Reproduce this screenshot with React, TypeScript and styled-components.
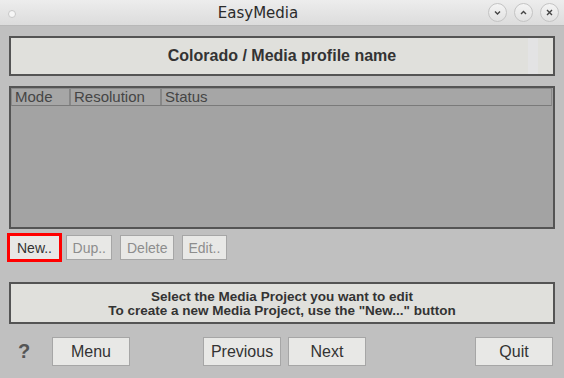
import styled, { createGlobalStyle } from "styled-components";

const GlobalStyle = createGlobalStyle`
    html, body {
        margin: 0;
        padding: 0;
        background: #c0c0c0;
    }
`;

const Window = styled.div`
    width: 564px;
    height: 378px;
    background: #c0c0c0;
    font-family: "Liberation Sans", Arial, sans-serif;
    display: flex;
    flex-direction: column;
    overflow: hidden;
`;

const TitleBar = styled.div`
    height: 26px;
    box-sizing: border-box;
    background: linear-gradient(#ededed, #dcdcdc);
    border-bottom: 1px solid #b8b8b8;
    display: flex;
    align-items: center;
    padding: 0 5px 0 8px;
`;

const Dot = styled.span`
    width: 6px;
    height: 6px;
    border-radius: 50%;
    background: #f6f6f6;
    border: 1px solid #c8c8c8;
    margin-top: 3px;
`;

const Title = styled.div`
    flex: 1;
    text-align: center;
    font-family: "DejaVu Sans", sans-serif;
    font-size: 15px;
    color: #2b2b2b;
    padding-left: 12px;
`;

const WinButtons = styled.div`
    display: flex;
    gap: 7px;
`;

const WinButton = styled.span`
    width: 19px;
    height: 19px;
    box-sizing: border-box;
    border-radius: 50%;
    border: 1px solid #c4c4c4;
    background: linear-gradient(#f4f4f4, #e2e2e2);
    display: flex;
    align-items: center;
    justify-content: center;
`;

const Content = styled.div`
    padding: 10px 9px 0 9px;
    display: flex;
    flex-direction: column;
`;

const HeaderBox = styled.div`
    height: 40px;
    box-sizing: border-box;
    border: 2px solid #545454;
    background: linear-gradient(
        to right,
        #e0e0dc 0,
        #e0e0dc 517px,
        #e3e3e4 517px,
        #e3e3e4 527px,
        #e0e0dc 527px
    );
    display: flex;
    align-items: center;
    justify-content: center;
    font-size: 16px;
    font-weight: bold;
    color: #333;
`;

const Table = styled.div`
    margin-top: 10px;
    height: 143px;
    box-sizing: border-box;
    border: 2px solid #545454;
    background: #a3a3a3;
`;

const HeadRow = styled.div`
    display: flex;
    height: 18px;
    box-sizing: border-box;
    border: 1px solid #8a8a8a;
    border-bottom-color: #7a7a7a;
    margin-right: 1px;
`;

const HeadCell = styled.div<{ $w?: number }>`
    ${(p) => (p.$w ? `width: ${p.$w}px;` : "flex: 1;")}
    box-sizing: border-box;
    border-right: ${(p) => (p.$w ? "2px solid #878787" : "none")};
    padding-left: 3px;
    font-size: 15px;
    line-height: 16px;
    color: #454545;
    background: #a6a6a6;
`;

const ActionRow = styled.div`
    display: flex;
    align-items: center;
    margin-top: 4px;
    margin-left: -2px;
    height: 29px;
`;

const SmallButton = styled.button<{ $focused?: boolean; $gap?: number }>`
    margin-left: ${(p) => p.$gap ?? 0}px;
    height: ${(p) => (p.$focused ? 29 : 25)}px;
    padding: 0 ${(p) => (p.$focused ? 7 : 5.5)}px;
    box-sizing: border-box;
    border-width: ${(p) => (p.$focused ? 3 : 1)}px;
    border-style: solid;
    border-color: ${(p) => (p.$focused ? "#ff0000" : "#a6a6a6")};
    background: #e8e8e6;
    font-family: "Liberation Sans", Arial, sans-serif;
    font-size: 14px;
    color: ${(p) => (p.$focused ? "#333" : "#8d8d8d")};
    border-radius: 0;
    outline: none;
`;

const InfoBox = styled.div`
    margin-top: 20px;
    height: 42px;
    box-sizing: border-box;
    border: 2px solid #545454;
    background: #e0e0dc;
    display: flex;
    flex-direction: column;
    align-items: center;
    justify-content: center;
    font-size: 13.5px;
    font-weight: bold;
    line-height: 14px;
    color: #333;
    padding-top: 2px;
`;

const BottomRow = styled.div`
    display: flex;
    align-items: center;
    margin-top: 13px;
    height: 29px;
`;

const Help = styled.span`
    width: 43px;
    padding-left: 9px;
    box-sizing: border-box;
    font-size: 20px;
    font-weight: bold;
    color: #555;
`;

const NavButton = styled.button<{ $gap?: number }>`
    margin-left: ${(p) => p.$gap ?? 0}px;
    width: 78px;
    height: 29px;
    box-sizing: border-box;
    border: 1px solid #a6a6a6;
    background: #e8e8e6;
    font-family: "Liberation Sans", Arial, sans-serif;
    font-size: 16px;
    color: #333;
    border-radius: 0;
    padding: 0;
`;

const Chevron = ({ up }: { up?: boolean }) => (
    <svg width="9" height="9" viewBox="0 0 9 9">
        <path
            d={up ? "M2 6 L4.5 3.5 L7 6" : "M2 3.5 L4.5 6 L7 3.5"}
            stroke="#444"
            strokeWidth="1.4"
            fill="none"
        />
    </svg>
);

const App = () => {
    return (
        <Window>
            <GlobalStyle />
            <TitleBar>
                <Dot />
                <Title>EasyMedia</Title>
                <WinButtons>
                    <WinButton>
                        <Chevron />
                    </WinButton>
                    <WinButton>
                        <Chevron up />
                    </WinButton>
                    <WinButton>
                        <svg width="9" height="9" viewBox="0 0 9 9">
                            <path d="M2 2 L7 7 M7 2 L2 7" stroke="#444" strokeWidth="1.4" />
                        </svg>
                    </WinButton>
                </WinButtons>
            </TitleBar>
            <Content>
                <HeaderBox>Colorado / Media profile name</HeaderBox>
                <Table>
                    <HeadRow>
                        <HeadCell $w={59}>Mode</HeadCell>
                        <HeadCell $w={91}>Resolution</HeadCell>
                        <HeadCell>Status</HeadCell>
                    </HeadRow>
                </Table>
                <ActionRow>
                    <SmallButton $focused>New..</SmallButton>
                    <SmallButton $gap={4}>Dup..</SmallButton>
                    <SmallButton $gap={8}>Delete</SmallButton>
                    <SmallButton $gap={8}>Edit..</SmallButton>
                </ActionRow>
                <InfoBox>
                    <div>Select the Media Project you want to edit</div>
                    <div>To create a new Media Project, use the "New..." button</div>
                </InfoBox>
                <BottomRow>
                    <Help>?</Help>
                    <NavButton>Menu</NavButton>
                    <NavButton $gap={73}>Previous</NavButton>
                    <NavButton $gap={7}>Next</NavButton>
                    <NavButton $gap={109}>Quit</NavButton>
                </BottomRow>
            </Content>
        </Window>
    );
};

export default App;
